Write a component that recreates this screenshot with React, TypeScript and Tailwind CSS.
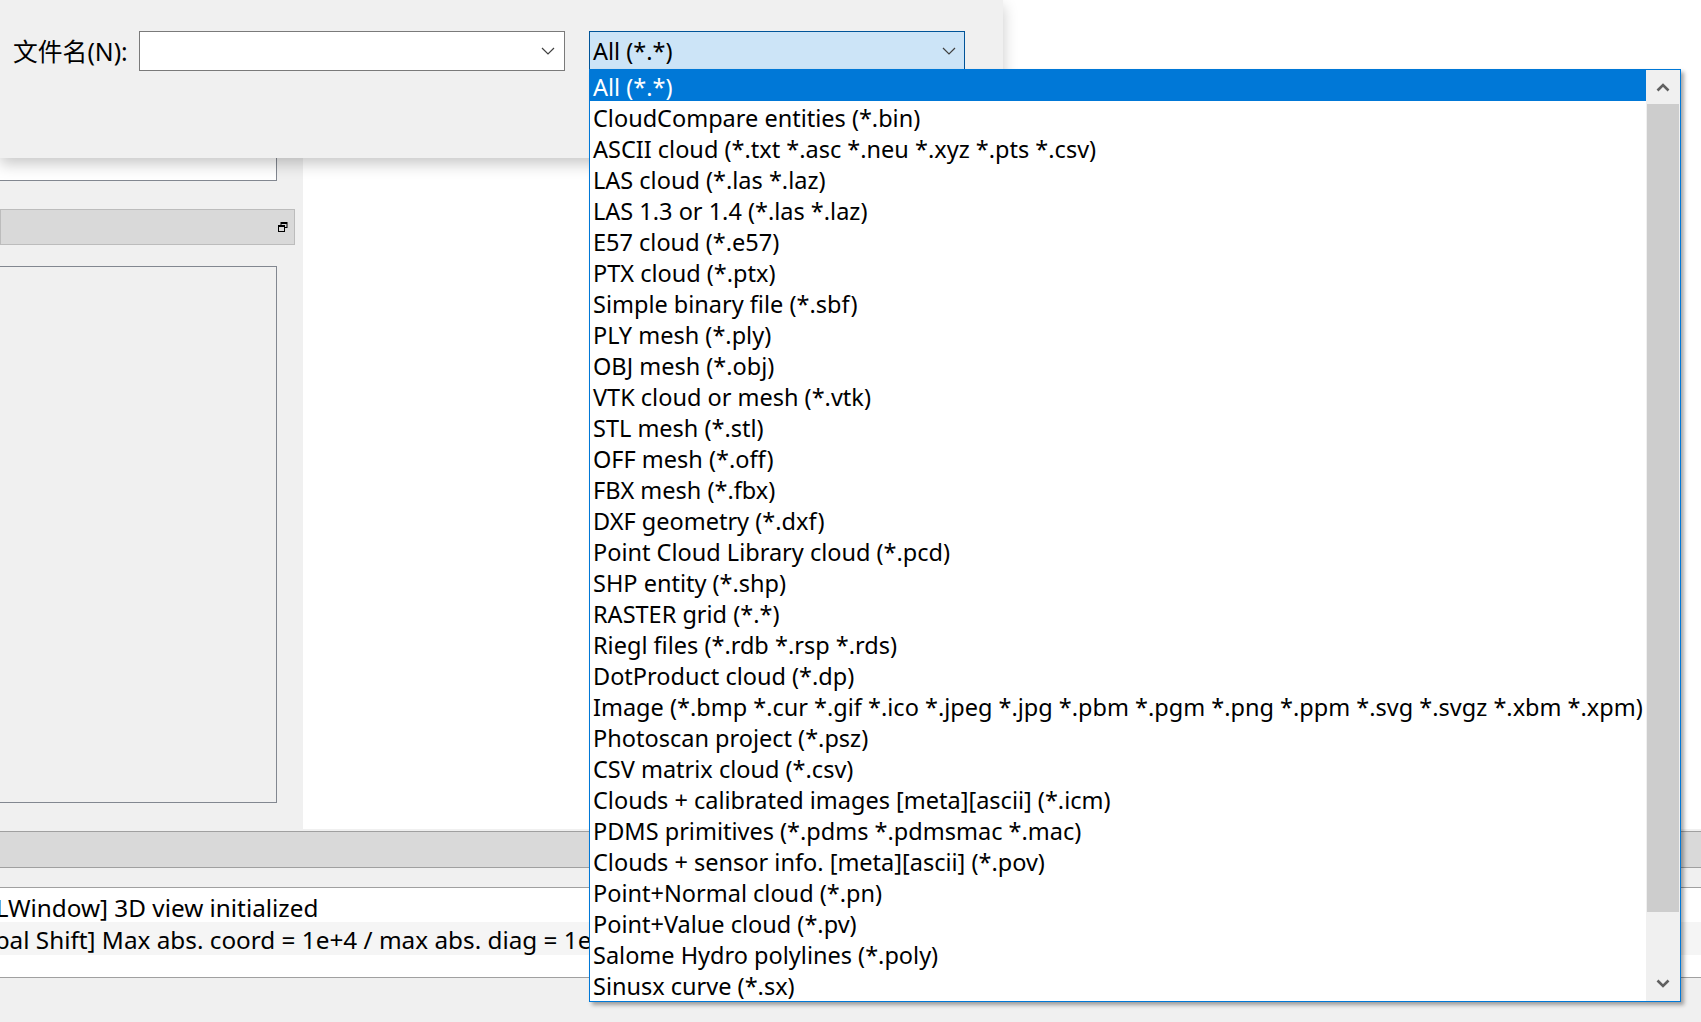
import React from 'react'

const formats = [
  'All (*.*)',
  'CloudCompare entities (*.bin)',
  'ASCII cloud (*.txt *.asc *.neu *.xyz *.pts *.csv)',
  'LAS cloud (*.las *.laz)',
  'LAS 1.3 or 1.4 (*.las *.laz)',
  'E57 cloud (*.e57)',
  'PTX cloud (*.ptx)',
  'Simple binary file (*.sbf)',
  'PLY mesh (*.ply)',
  'OBJ mesh (*.obj)',
  'VTK cloud or mesh (*.vtk)',
  'STL mesh (*.stl)',
  'OFF mesh (*.off)',
  'FBX mesh (*.fbx)',
  'DXF geometry (*.dxf)',
  'Point Cloud Library cloud (*.pcd)',
  'SHP entity (*.shp)',
  'RASTER grid (*.*)',
  'Riegl files (*.rdb *.rsp *.rds)',
  'DotProduct cloud (*.dp)',
  'Image (*.bmp *.cur *.gif *.ico *.jpeg *.jpg *.pbm *.pgm *.png *.ppm *.svg *.svgz *.xbm *.xpm)',
  'Photoscan project (*.psz)',
  'CSV matrix cloud (*.csv)',
  'Clouds + calibrated images [meta][ascii] (*.icm)',
  'PDMS primitives (*.pdms *.pdmsmac *.mac)',
  'Clouds + sensor info. [meta][ascii] (*.pov)',
  'Point+Normal cloud (*.pn)',
  'Point+Value cloud (*.pv)',
  'Salome Hydro polylines (*.poly)',
  'Sinusx curve (*.sx)',
]

function Chevron() {
  return (
    <svg width="14" height="8" viewBox="0 0 14 8">
      <polyline points="1,1 7,7 13,1" fill="none" stroke="#404040" strokeWidth="1.2" />
    </svg>
  )
}

function ScrollArrow({ up }: { up?: boolean }) {
  return (
    <svg width="14" height="10" viewBox="0 0 14 10">
      <polyline
        points={up ? '1.5,8.5 7,3 12.5,8.5' : '1.5,1.5 7,7 12.5,1.5'}
        fill="none"
        stroke="#606060"
        strokeWidth="2.6"
      />
    </svg>
  )
}

export default function App() {
  return (
    <div
      className="relative w-[1701px] h-[1022px] overflow-hidden bg-[#f0f0f0] text-black text-[23.5px]"
      style={{ fontFamily: '"Segoe UI", "Noto Sans", "Noto Sans CJK SC", sans-serif' }}
    >
      {/* main window behind the dialog */}
      <div className="flex h-[831px]">
        {/* DB tree / properties column */}
        <div className="w-[303px] shrink-0 flex flex-col">
          <div className="h-[181px] w-[277px] bg-white border-r border-b border-[#828790]" />
          <div className="mt-[28px] h-[36px] w-[295px] bg-[#d9d9d9] border border-[#bcbcbc] flex items-center justify-end pr-[6px]">
            <svg width="10" height="10" viewBox="0 0 10 10">
              <rect x="3" y="0.5" width="6" height="5" fill="none" stroke="#000" strokeWidth="1" />
              <rect x="3" y="0.5" width="6" height="1.5" fill="#000" />
              <rect x="0.5" y="3.5" width="6" height="6" fill="#d9d9d9" stroke="#000" strokeWidth="1" />
              <rect x="0.5" y="3.5" width="6" height="1.5" fill="#000" />
            </svg>
          </div>
          <div className="mt-[21px] h-[537px] w-[277px] border-r border-y border-[#828790]" />
        </div>
        {/* 3D view */}
        <div className="flex-1 bg-white mb-[2px]" />
      </div>

      <div className="h-[37px] bg-[#d9d9d9] border-y border-[#a0a0a0]" />

      {/* console */}
      <div className="mt-[19px] h-[91px] bg-white border-y border-[#a0a0a0] pt-[2px] whitespace-nowrap overflow-hidden text-[24.3px]">
        <div className="h-[32px] leading-[36px]">
          <span className="inline-block -ml-[30px]">[GLWindow] 3D view initialized</span>
        </div>
        <div className="h-[33px] leading-[36px] bg-[#f5f5f5]">
          <span className="inline-block -ml-[52px]">[Global Shift] Max abs. coord = 1e+4 / max abs. diag = 1e+5</span>
        </div>
      </div>

      {/* file dialog (partial) */}
      <div className="absolute left-0 top-0 w-[1003px] h-[158px] bg-[#f0f0f0] shadow-[0_6px_14px_rgba(0,0,0,0.22)]">
        <div className="flex items-start pt-[31px] pl-[13px]">
          <span className="h-[40px] leading-[40px] w-[126px] shrink-0 text-[24.8px]">文件名(N):</span>
          <div className="h-[40px] w-[426px] bg-white border border-[#7a7a7a] flex items-center justify-end pr-[9px]">
            <Chevron />
          </div>
          <div className="ml-[24px] h-[39px] w-[376px] bg-[#cce4f7] border border-[#005499] flex items-center justify-between pl-[3px] pr-[8px]">
            <span className="leading-[40px]">All (*.*)</span>
            <Chevron />
          </div>
        </div>
      </div>

      {/* open dropdown list */}
      <div className="absolute left-[589px] top-[69px] w-[1092px] h-[933px] bg-white border border-[#0078d7] shadow-[3px_3px_4px_rgba(0,0,0,0.35)] flex">
        <div className="flex-1 whitespace-nowrap overflow-hidden">
          {formats.map((f, i) => (
            <div
              key={f}
              className={`h-[31px] leading-[34px] pl-[3px] ${i === 0 ? 'bg-[#0078d7] text-white' : ''}`}
            >
              {f}
            </div>
          ))}
        </div>
        <div className="w-[34px] shrink-0 bg-[#f0f0f0] flex flex-col">
          <div className="h-[34px] flex items-center justify-center">
            <ScrollArrow up />
          </div>
          <div className="h-[808px] mx-[1px] bg-[#cdcdcd]" />
          <div className="flex-1 flex items-end justify-center pb-[12px]">
            <ScrollArrow />
          </div>
        </div>
      </div>
    </div>
  )
}
